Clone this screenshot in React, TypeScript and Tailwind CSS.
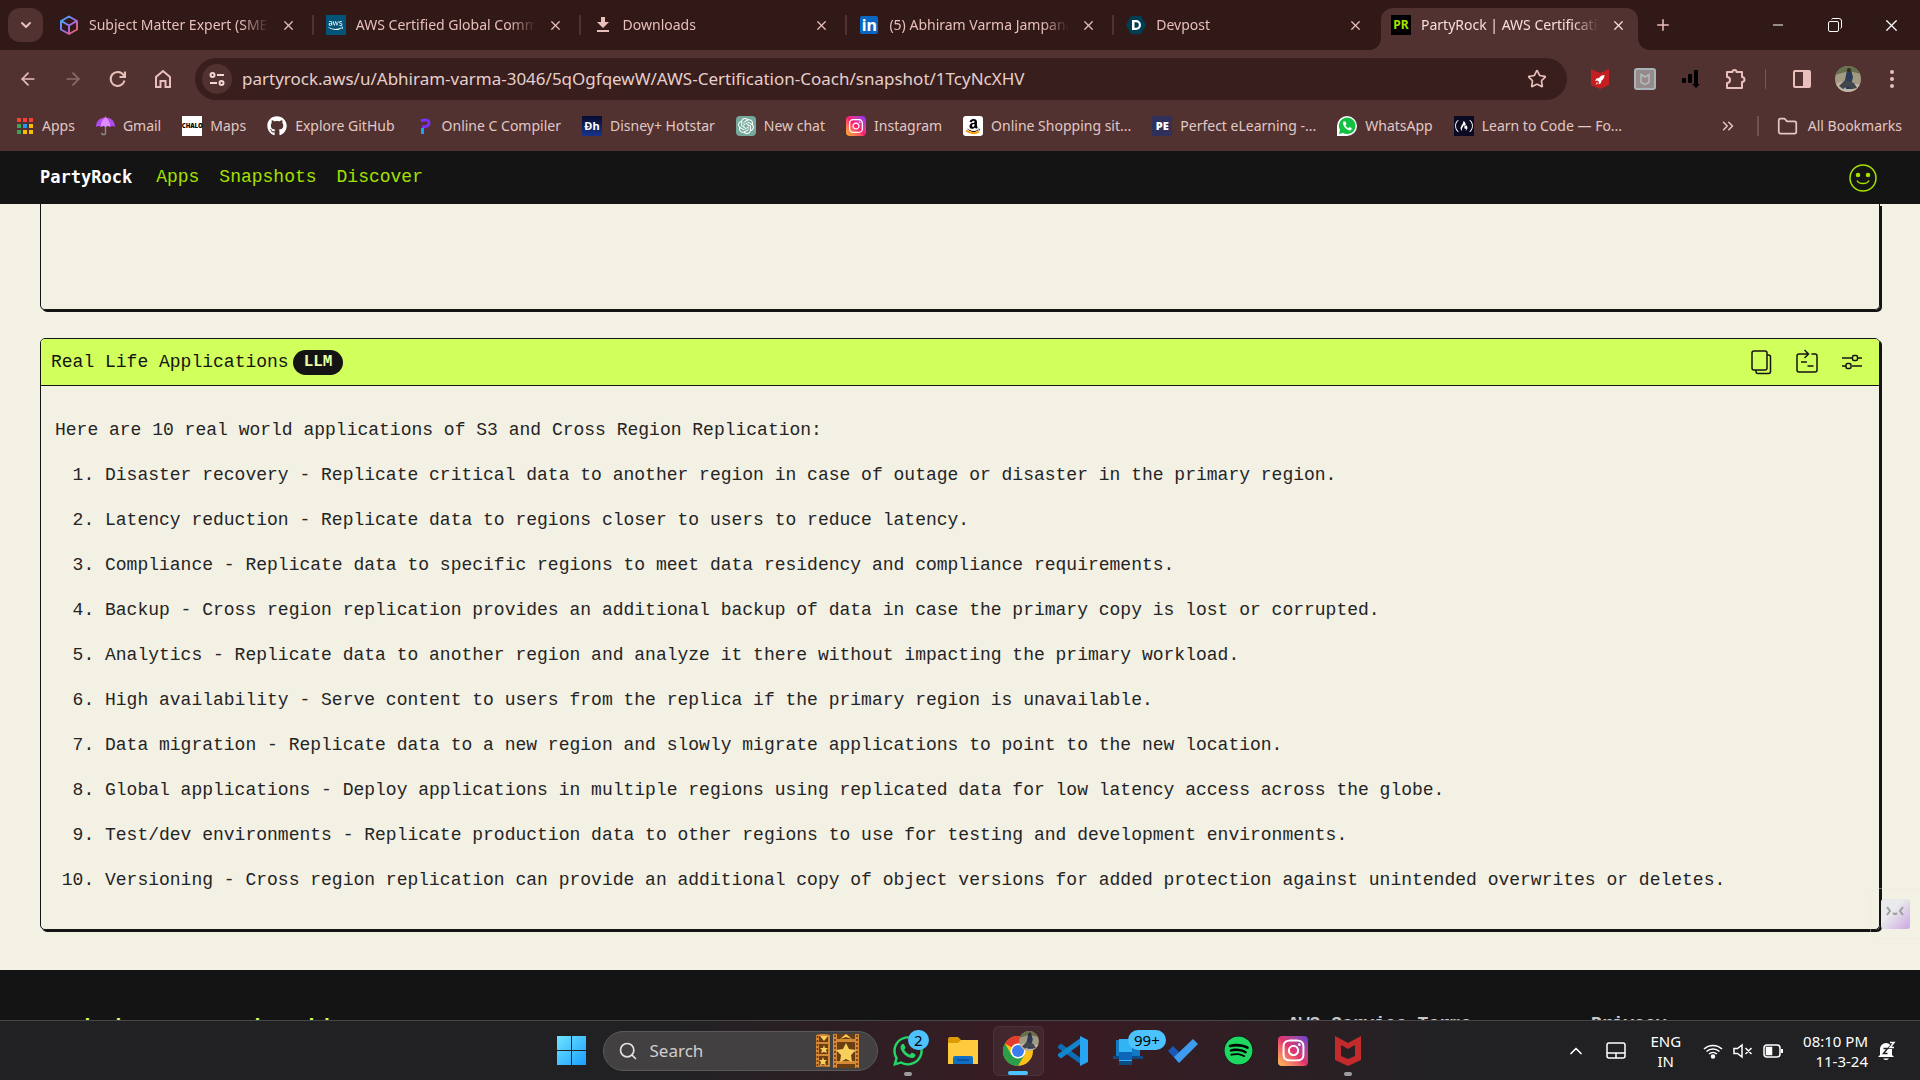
import React from 'react';
import { ArrowLeft, ArrowRight, ChevronDown, ChevronUp, ChevronsRight, Folder, Minus, Plus, Search, Star, X } from 'lucide-react';
import { FaAmazon, FaAws, FaFreeCodeCamp, FaGithub, FaInstagram, FaSpotify, FaWhatsapp } from 'react-icons/fa';
import { SiOpenai } from 'react-icons/si';

const tabs = [
  { title: 'Subject Matter Expert (SME) P', icon: <CubeIcon /> },
  { title: 'AWS Certified Global Commun', icon: <span className="flex size-5 items-center justify-center bg-[#015478] text-white"><FaAws size={15} /></span> },
  { title: 'Downloads', icon: <DownloadIcon /> },
  { title: '(5) Abhiram Varma Jampana |', icon: <span className="flex size-[18px] items-center justify-center rounded-xs bg-[#0a66c2] text-base leading-none font-bold text-white">in</span> },
  { title: 'Devpost', icon: <DevpostIcon /> },
];

const bookmarks = [
  { title: 'Apps', icon: <AppsGrid /> },
  { title: 'Gmail', icon: <UmbrellaIcon /> },
  { title: 'Maps', icon: <span className="flex size-5 items-center justify-center bg-white text-[6px] font-black text-black">CHALO</span> },
  { title: 'Explore GitHub', icon: <FaGithub size={20} color="#fff" /> },
  { title: 'Online C Compiler', icon: <ProgrammizIcon /> },
  { title: 'Disney+ Hotstar', icon: <span className="flex size-5 items-center justify-center bg-linear-to-b from-[#060b2e] to-[#17348c] text-[11px] font-bold text-white">Ðh</span> },
  { title: 'New chat', icon: <span className="flex size-5 items-center justify-center rounded-sm bg-[#74a99b] text-white"><SiOpenai size={16} /></span> },
  { title: 'Instagram', icon: <span className="flex size-5 items-center justify-center rounded-sm bg-linear-to-tr from-[#ffb300] via-[#ff0f6e] to-[#8a0bff] text-white"><FaInstagram size={16} /></span> },
  { title: 'Online Shopping sit...', icon: <AmazonIcon /> },
  { title: 'Perfect eLearning -...', icon: <span className="flex size-5 items-center justify-center bg-[#2f305c] text-[11px] font-black text-white">PE</span> },
  { title: 'WhatsApp', icon: <WhatsAppBubble /> },
  { title: 'Learn to Code — Fo...', icon: <span className="flex size-5 items-center justify-center bg-[#0a0a23] text-white"><FaFreeCodeCamp size={18} /></span> },
];

const applications = [
  'Disaster recovery - Replicate critical data to another region in case of outage or disaster in the primary region.',
  'Latency reduction - Replicate data to regions closer to users to reduce latency.',
  'Compliance - Replicate data to specific regions to meet data residency and compliance requirements.',
  'Backup - Cross region replication provides an additional backup of data in case the primary copy is lost or corrupted.',
  'Analytics - Replicate data to another region and analyze it there without impacting the primary workload.',
  'High availability - Serve content to users from the replica if the primary region is unavailable.',
  'Data migration - Replicate data to a new region and slowly migrate applications to point to the new location.',
  'Global applications - Deploy applications in multiple regions using replicated data for low latency access across the globe.',
  'Test/dev environments - Replicate production data to other regions to use for testing and development environments.',
  'Versioning - Cross region replication can provide an additional copy of object versions for added protection against unintended overwrites or deletes.',
];

function CubeIcon() {
  return (
    <svg width="20" height="20" viewBox="0 0 20 20" fill="none" strokeWidth="2" strokeLinejoin="round">
      <defs>
        <linearGradient id="cube" x1="0" y1="0" x2="1" y2="1">
          <stop offset="0" stopColor="#2fb4f5" />
          <stop offset=".5" stopColor="#9a6cf0" />
          <stop offset="1" stopColor="#ff5c3c" />
        </linearGradient>
      </defs>
      <path d="M10 1.500 18 6v8.500L10 19l-8-4.500V6zM2.500 6.200 10 10.500l7.500-4.300M10 10.500V18" stroke="url(#cube)" />
    </svg>
  );
}

function DownloadIcon() {
  return (
    <svg width="20" height="20" viewBox="0 0 20 20" fill="#e9bfbb">
      <path d="M8 2h4v5h4l-6 6-6-6h4zM4 15h12v2H4z" />
    </svg>
  );
}

function DevpostIcon() {
  return (
    <svg width="20" height="20" viewBox="0 0 20 20">
      <path d="M5 1h10l5 9-5 9H5l-5-9z" fill="#003e54" />
      <path d="M6 5h4a5 5 0 0 1 0 10H6zM8.500 7.200v5.600H10a2.800 2.800 0 0 0 0-5.600z" fill="#fff" fillRule="evenodd" />
    </svg>
  );
}

function AppsGrid() {
  const colors = ['#f44336', '#f44336', '#f44336', '#34a853', '#2196f3', '#fbbc04', '#34a853', '#fbbc04', '#fbbc04'];
  return (
    <svg width="18" height="18" viewBox="0 0 18 18">
      {colors.map((c, i) => (
        <rect key={i} x={(i % 3) * 6 + 1} y={Math.floor(i / 3) * 6 + 1} width="4" height="4" fill={c} />
      ))}
    </svg>
  );
}

function UmbrellaIcon() {
  return (
    <svg width="19" height="20" viewBox="0 0 20 20">
      <path d="M10 9v8q0 2-2 2t-2-2" fill="none" stroke="#8b8b8b" strokeWidth="1.500" />
      <path d="M10 0v2" stroke="#8b8b8b" strokeWidth="1.500" />
      <path d="M0 11C0 4 5 1 10 1s10 3 10 10q-3-2-5 0-2.500-2-5 0-2.500-2-5 0-2-2-5 0z" fill="#b14cf0" />
      <path d="M5 11C5 5 8 2 10 1c2 1 5 4 5 10q-2.500-2-5 0-2.500-2-5 0z" fill="#e08cff" />
    </svg>
  );
}

function ProgrammizIcon() {
  return (
    <svg width="18" height="18" viewBox="0 0 18 18" fill="none" strokeWidth="3">
      <path d="M5 4c4-2 8-1 8 2s-4 4-7 4" stroke="#7b2ff7" />
      <path d="M6.500 11v6" stroke="#14a5f5" />
    </svg>
  );
}

function AmazonIcon() {
  return (
    <svg width="20" height="20" viewBox="0 0 20 20">
      <rect width="20" height="20" rx="3" fill="#fff" />
      <FaAmazon x="3" y="2" size={15} color="#000" />
      <path d="M3 14.500q7 5 13 1" fill="none" stroke="#ff9900" strokeWidth="2" />
    </svg>
  );
}

function WhatsAppBubble() {
  return (
    <svg width="20" height="20" viewBox="0 0 20 20">
      <path d="M0 20V10A10 10 0 1 1 10 20z" fill="#fff" />
      <path d="m2 18 1-4a8.300 8.300 0 1 1 3 3z" fill="#12c143" />
      <path d="M6.500 5.500c-2 3 3 9 6.500 9 1.500-.5 2-1.500 1.500-2.500l-2-1-1.200 1.200q-2-1-3-3L9.500 8l-1-2.500z" fill="#fff" />
    </svg>
  );
}

function WindowTabs() {
  return (
    <div className="flex h-[50px] items-stretch bg-[#301917] text-sm text-[#e9bfbb]">
      <button aria-label="Search tabs" className="mt-2 ml-2 flex h-[34px] w-[35px] shrink-0 items-center justify-center rounded-xl bg-[#523230]">
        <ChevronDown size={16} strokeWidth={3} />
      </button>
      <div className="ml-1 flex w-[1334px] min-w-0 shrink">
        {tabs.map((tab, i) => (
          <div key={tab.title} className="flex min-w-0 flex-1 items-center pl-3">
            <span className="flex w-5 shrink-0 justify-center">{tab.icon}</span>
            <button className="ml-2.5 min-w-0 flex-1 overflow-hidden text-left whitespace-nowrap [mask-image:linear-gradient(to_right,black_85%,transparent)]">{tab.title}</button>
            <button aria-label={'Close ' + tab.title} className="mr-4 ml-3 shrink-0"><X size={15} strokeWidth={2} /></button>
            <span className={i < 4 ? 'h-5 w-0.5 bg-[#523230]' : 'w-0.5'} />
          </div>
        ))}
      </div>
      <div className="relative mt-2 flex w-[257px] shrink-0 items-center rounded-t-xl bg-[#523230] pb-2 pl-2.5 text-[#f6dedb]">
        <svg className="absolute bottom-0 -left-3" width="12" height="12"><path d="M12 0v12H0A12 12 0 0 0 12 0" fill="#523230" /></svg>
        <svg className="absolute -right-3 bottom-0" width="12" height="12"><path d="M0 0v12h12A12 12 0 0 1 0 0" fill="#523230" /></svg>
        <span className="flex size-5 shrink-0 items-center justify-center bg-black text-xs font-bold text-[#a5e100]">PR</span>
        <button className="ml-2.5 min-w-0 flex-1 overflow-hidden text-left whitespace-nowrap [mask-image:linear-gradient(to_right,black_85%,transparent)]">PartyRock | AWS Certification</button>
        <button aria-label="Close tab" className="mx-3 shrink-0"><X size={15} strokeWidth={2} /></button>
      </div>
      <button aria-label="New tab" className="ml-4 w-5"><Plus size={18} /></button>
      <div className="ml-auto flex text-white">
        <button aria-label="Minimize" className="flex w-[57px] items-center justify-center"><Minus size={16} strokeWidth={1.500} /></button>
        <button aria-label="Restore" className="flex w-[57px] items-center justify-center">
          <svg width="14" height="14" viewBox="0 0 14 14" fill="none" stroke="currentColor"><rect x=".5" y="3.500" width="10" height="10" rx="1.500" /><path d="M3.500 1.500q.5-1 1.500-1h6q2.500 0 2.500 2.500v6q0 1-1 1.500" /></svg>
        </button>
        <button aria-label="Close window" className="flex w-[57px] items-center justify-center"><X size={19} strokeWidth={1.500} /></button>
      </div>
    </div>
  );
}

function Toolbar() {
  return (
    <div className="flex h-[58px] items-center text-[#e9bfbb]">
      <div className="flex w-[195px] shrink-0 items-center gap-[25px] pl-[18px]">
        <button aria-label="Back"><ArrowLeft size={20} /></button>
        <button aria-label="Forward" className="text-[#8f6c69]"><ArrowRight size={20} /></button>
        <button aria-label="Reload">
          <svg width="20" height="20" viewBox="0 0 20 20" fill="none" stroke="currentColor" strokeWidth="2"><path d="M16.500 11.500A7 7 0 1 1 15.500 6l1.500 2M17 2.500V8h-5.500" /></svg>
        </button>
        <button aria-label="Home">
          <svg width="20" height="20" viewBox="0 0 20 20" fill="none" stroke="currentColor" strokeWidth="2"><path d="M3 18V8l7-6 7 6v10h-4.500v-6h-5v6z" /></svg>
        </button>
      </div>
      <div className="flex h-[42px] min-w-0 flex-1 items-center rounded-full bg-[#381e1c] pr-5 pl-[7px]">
        <button aria-label="Site information" className="flex size-[30px] shrink-0 items-center justify-center rounded-full bg-[#523230]">
          <svg width="18" height="18" viewBox="0 0 18 18" fill="none" stroke="#f0d8d5" strokeWidth="2"><circle cx="4.500" cy="5" r="2" /><path d="M9 5h7M2 13h7" /><circle cx="13.500" cy="13" r="2" /></svg>
        </button>
        <input aria-label="Address" className="ml-2.5 min-w-0 flex-1 bg-transparent text-[17px] text-[#e6cfcc] outline-none" defaultValue="partyrock.aws/u/Abhiram-varma-3046/5qOgfqewW/AWS-Certification-Coach/snapshot/1TcyNcXHV" />
        <button aria-label="Bookmark this tab"><Star size={20} /></button>
      </div>
      <div className="flex w-[353px] shrink-0 items-center pl-[22px]">
        <button aria-label="McAfee" className="flex w-[45px] pl-0.5">
          <svg width="18" height="20" viewBox="0 0 18 20">
            <path d="M0 0 9 4l9-4v16l-9 4-9-4z" fill="#c41e20" />
            <path d="M13.500 6c-3 0-4.500 1.500-5.500 3l-2.500.5L4 12l2.500-.5L8 13l-.5 2.500 2.500-1.500.5-2.500c1.500-1 3-2.500 3-5.500M6 13l-1.500 3L7 14z" fill="#fff" />
          </svg>
        </button>
        <button aria-label="Web protection" className="flex w-[46px]">
          <svg width="22" height="22" viewBox="0 0 22 22" fill="none"><rect x="1" y="1" width="20" height="20" rx="2" fill="#968a8a" stroke="#a9b4b8" strokeWidth="2" /><path d="M7 6.500 11 9l4-2.500v8L11 16.500l-4-2z" stroke="#b3babd" strokeWidth="1.500" /></svg>
        </button>
        <button aria-label="Downloader" className="flex w-[45px] pl-0.5">
          <svg width="18" height="20" viewBox="0 0 18 20" fill="#000"><rect y="9" width="4" height="5" rx="1" /><rect x="6" y="5" width="4" height="9" rx="1" /><path d="M12 1h4v14h2l-4 4-4-4h2z" /></svg>
        </button>
        <button aria-label="Extensions" className="flex w-[40px]">
          <svg width="22" height="22" viewBox="0 0 22 22" fill="none" stroke="currentColor" strokeWidth="2" strokeLinejoin="round"><path d="M2 4h5.500a2 2 0 0 1 4 0H17v5a2.500 2.500 0 0 1 0 5v6H2v-5a3 3 0 0 0 0-6z" /></svg>
        </button>
        <span className="h-5 w-px bg-[#7a5552]" />
        <button aria-label="Side panel" className="ml-[26px]">
          <svg width="20" height="20" viewBox="0 0 20 20"><rect x="2" y="2" width="16" height="16" rx="1" fill="none" stroke="currentColor" strokeWidth="2" /><path d="M11 2h7v16h-7z" fill="currentColor" /></svg>
        </button>
        <button aria-label="Profile" className="ml-[23px]"><Avatar size={26} /></button>
        <button aria-label="Menu" className="ml-[27px]">
          <svg width="8" height="20" viewBox="0 0 8 20" fill="currentColor"><circle cx="4" cy="3" r="2" /><circle cx="4" cy="10" r="2" /><circle cx="4" cy="17" r="2" /></svg>
        </button>
      </div>
    </div>
  );
}

function Avatar({ size }: { size: number }) {
  return (
    <svg width={size} height={size} viewBox="0 0 26 26">
      <clipPath id={'avatar' + size}><circle cx="13" cy="13" r="13" /></clipPath>
      <g clipPath={`url(#avatar${size})`}>
        <path d="M0 0h26v26H0z" fill="#a39a82" />
        <path d="M0 0h26v8L14 5 0 9z" fill="#66704d" />
        <path d="M0 18l9-3 17 4v7H0z" fill="#c0b6a5" />
        <path d="M12 4h4l2 7-2 8 2 4h-7l-1-9z" fill="#2b3b5a" />
        <path d="M4 20l6-6 9 3 3 5-5 1-4-3-5 3z" fill="#41474b" />
        <circle cx="14" cy="4" r="2" fill="#3b2a23" />
      </g>
    </svg>
  );
}

function BookmarksBar() {
  return (
    <nav aria-label="Bookmarks" className="flex h-9 items-center pr-[18px] pl-4 text-sm whitespace-nowrap text-[#e0c8c5]">
      <div className="flex min-w-0 flex-1 gap-[21px] overflow-hidden">
        {bookmarks.map((b) => (
          <a key={b.title} href="#" className="flex items-center gap-2">{b.icon}{b.title}</a>
        ))}
      </div>
      <button aria-label="More bookmarks" className="mr-5"><ChevronsRight size={18} /></button>
      <span className="h-5 w-0.5 bg-[#75504d]" />
      <button className="ml-[18px] flex items-center gap-2.5"><Folder size={21} />All Bookmarks</button>
    </nav>
  );
}

function SiteHeader() {
  return (
    <header className="flex h-[53px] shrink-0 items-center bg-[#141414] px-10 font-['Liberation_Mono',monospace] text-[18px] text-[#a5e100]">
      <a href="#" className="font-['DejaVu_Sans_Mono',monospace] text-[17px] font-bold text-white">PartyRock</a>
      <nav className="ml-6 flex gap-5">
        <a href="#">Apps</a>
        <a href="#">Snapshots</a>
        <a href="#">Discover</a>
      </nav>
      <button aria-label="Account" className="ml-auto mr-[3px]">
        <svg width="28" height="28" viewBox="0 0 28 28" fill="none" stroke="currentColor" strokeWidth="1.500"><circle cx="14" cy="14" r="13" /><circle cx="9" cy="11" r="1.500" fill="currentColor" /><circle cx="19" cy="11" r="1.500" fill="currentColor" /><path d="M8 16.500c2 4 10 4 12 0" /></svg>
      </button>
    </header>
  );
}

function ResultCard() {
  return (
    <section className="mt-7 rounded-[5px] border border-[#141414] shadow-[2px_2px_0_#141414]">
      <div className="flex h-[47px] items-center rounded-t-[4px] border-b border-[#141414] bg-[#d1ff5c] pr-4 pl-2.5">
        <h2 className="text-[18px]">Real Life Applications</h2>
        <span className="ml-1 rounded-full bg-[#141414] px-[11px] text-base leading-[25px] font-bold text-[#e6ffa8]">LLM</span>
        <div className="ml-auto flex items-center gap-[22px]">
          <button aria-label="Copy">
            <svg width="24" height="26" viewBox="0 0 24 26" fill="none" stroke="currentColor" strokeWidth="1.500"><rect x="3" y="2" width="15" height="19" rx="2" /><path d="M18 6h1.500a2 2 0 0 1 2 2v14.500a2 2 0 0 1-2 2H9a2 2 0 0 1-2-2V21" /></svg>
          </button>
          <button aria-label="Retry">
            <svg width="24" height="26" viewBox="0 0 24 26" fill="none" stroke="currentColor" strokeWidth="1.500"><path d="M16.500 5H20a2 2 0 0 1 2 2v14a2 2 0 0 1-2 2H4a2 2 0 0 1-2-2V7a2 2 0 0 1 2-2h9M9.500 1l4 4-4 4M6 13h6M12.500 17h6" /></svg>
          </button>
          <button aria-label="Settings">
            <svg width="22" height="22" viewBox="0 0 22 22" fill="none" stroke="currentColor" strokeWidth="1.500"><path d="M1 7h10M17 7h4M1 15h4M11 15h10" /><rect x="11.500" y="4.500" width="5" height="5" rx="1.500" /><rect x="5" y="12.500" width="5" height="5" rx="1.500" /></svg>
          </button>
        </div>
      </div>
      <div className="px-3.5 pt-[31px] pb-[35px] text-[18px] leading-[27px] text-[#242424]">
        <p>Here are 10 real world applications of S3 and Cross Region Replication:</p>
        <ol className="mt-[18px] flex list-decimal flex-col gap-[18px] pl-[50px]">
          {applications.map((text) => (
            <li key={text}>{text}</li>
          ))}
        </ol>
      </div>
    </section>
  );
}

function Page() {
  return (
    <div className="relative flex min-h-0 flex-1 flex-col overflow-hidden bg-[#f3f0e4] font-['Liberation_Mono',monospace] text-[#141414]">
      <SiteHeader />
      <main className="shrink-0 px-10 pb-10">
        <section className="h-[106px] rounded-b-[5px] border border-t-0 border-[#141414] shadow-[2px_2px_0_#141414]" />
        <ResultCard />
      </main>
      <footer className="flex shrink-0 items-start bg-[#141414] px-10 pt-[42px] pb-10 leading-6 font-bold text-[#c8c8c8]">
        <a href="#" className="flex-1 pt-1 text-[21px] text-[#d1ff5c]">Read the PartyRock Guide</a>
        <a href="#" className="w-[303px] text-[18px]">AWS Service Terms</a>
        <a href="#" className="w-[289px] text-[18px]">Privacy</a>
      </footer>
      <button aria-label="Assistant" className="absolute right-0 bottom-[81px] flex h-[51px] w-[50px] items-center rounded-l-lg border border-r-0 border-[#ece9dd]/40 pl-2.5">
        <svg width="29" height="30" viewBox="0 0 29 30" fill="none">
          <defs><linearGradient id="mascot" x1="0" y1="0" x2="1" y2="1"><stop offset=".4" stopColor="#e8eaeb" /><stop offset="1" stopColor="#cda5e4" /></linearGradient></defs>
          <rect width="29" height="30" rx="3" fill="url(#mascot)" />
          <path d="m6 8 3 4-3 4M22 8l-3 4 3 4M12 14q2 2 4 0" stroke="#9b9ea0" strokeWidth="2" />
        </svg>
      </button>
    </div>
  );
}

function TaskButton({ label, running, badge, children }: { label: string; running?: boolean; badge?: string; children: React.ReactNode }) {
  return (
    <button aria-label={label} className="relative flex h-[50px] w-[55px] shrink-0 items-center justify-center">
      {children}
      {badge && <span className="absolute top-1 left-1/2 min-w-5 rounded-full bg-[#4cc2ff] px-1.5 text-[15px] leading-5 text-black">{badge}</span>}
      {running && <span className="absolute bottom-0 h-1 w-2 rounded-full bg-[#9d9da0]" />}
    </button>
  );
}

function Taskbar() {
  return (
    <div className="grid h-[60px] shrink-0 grid-cols-[1fr_auto_1fr] items-center border-t border-[#474749] bg-linear-to-r from-[#212124] from-35% via-[#3a1b23] via-55% to-[#212124] to-75% text-white">
      <div />
      <div className="flex items-center">
        <TaskButton label="Start">
          <svg width="30" height="30" viewBox="0 0 30 30">
            <defs><linearGradient id="win" x1="0" y1="0" x2="1" y2="1"><stop stopColor="#6fe4ff" /><stop offset="1" stopColor="#1a9fff" /></linearGradient></defs>
            <path d="M0 0h14v14H0zM15 0h14v14H15zM0 15h14v14H0zM15 15h14v14H15z" fill="url(#win)" />
          </svg>
        </TaskButton>
        <div className="mx-[3px] flex h-10 w-[275px] items-center rounded-full border border-[#5a5859] bg-[#434041] pr-[18px] pl-3.5">
          <Search size={20} color="#e2e2e2" />
          <input aria-label="Search" placeholder="Search" className="ml-3 min-w-0 flex-1 bg-transparent text-[17px] outline-none placeholder:text-[#cfcfcf]" />
          <svg width="43" height="34" viewBox="0 0 43 34">
            <path d="M0 1q7-2 14 0v32q-7-1-14 0z" fill="#d58a35" />
            <path d="M17 0h26v34H17z" fill="#d58a35" />
            <path d="M3 2h9v6H3zM3 10h9v10H3zM3 22h9v9H3zM21 0h18v5H21zM21 8h18v19H21zM21 30h18v4H21z" fill="#6b3d12" />
            <path d="m30 9 3 6 7 1-5 5 1 7-6-3-6 3 1-7-5-5 7-1zM8 11l1 3h3l-2 2 1 3-3-1-3 1 1-3-2-2h3zM7 23l1 3h3l-2 2 1 3-3-1-3 1 1-3-2-2h3zM24 5l6-5 6 5-6-2zM4 2h8l-4 5z" fill="#f7cf5c" />
            <path d="M19 1v33M41 1v33M1.500 2v30" stroke="#6b3520" strokeWidth="1.500" strokeDasharray="2 2" />
          </svg>
        </div>
        <TaskButton label="WhatsApp" running badge="2"><FaWhatsapp size={34} color="#25d366" /></TaskButton>
        <TaskButton label="File Explorer">
          <svg width="30" height="28" viewBox="0 0 30 28"><path d="M0 2q0-2 2-2h8l3 3h15v8H0z" fill="#dc9b04" /><path d="M0 6h10l3-3h17v24H0z" fill="#fdcb3d" /><path d="M5 26v-5q0-2 2-2h16q2 0 2 2v6H5z" fill="#0f6fc5" /><path d="M9 23h12" stroke="#0a4a92" strokeWidth="1.500" /></svg>
        </TaskButton>
        <button aria-label="Chrome" className="relative mx-0.5 flex h-[50px] w-[51px] items-center justify-center rounded-md border border-white/5 bg-white/5">
          <svg width="30" height="30" viewBox="0 0 30 30">
            <circle cx="15" cy="15" r="15" fill="#fbc116" />
            <path d="M15 15 2 7.500A15 15 0 0 1 28 7.500H15z" fill="#e33b2e" />
            <path d="M2 7.500A15 15 0 0 0 15 30l6.500-11.200L8.500 19z" fill="#2a9e49" />
            <circle cx="15" cy="15" r="7.500" fill="#fff" /><circle cx="15" cy="15" r="6" fill="#3b7ded" />
          </svg>
          <span className="absolute top-1 right-1"><Avatar size={20} /></span>
          <span className="absolute bottom-0 h-1 w-5 rounded-full bg-[#4cc2ff]" />
        </button>
        <TaskButton label="Visual Studio Code">
          <svg width="30" height="30" viewBox="0 0 30 30"><path d="M0 10l3-2.500L24 23v6L0 12z" fill="#0d6db4" /><path d="M0 20l3 2.500L24 7V1L0 18z" fill="#1285cf" /><path d="m22 0 8 4v22l-8 4z" fill="#27a4f2" /></svg>
        </TaskButton>
        <TaskButton label="Phone Link" badge="99+">
          <svg width="30" height="28" viewBox="0 0 30 28"><path d="M3 3h24v16H3z" fill="#1479c5" /><path d="M0 19h30v3H0z" fill="#0b4b86" /><path d="M6 2h13v26H6z" fill="#33b3f1" /><path d="M6 15h13v8H6z" fill="#0d66b8" /><path d="M6 24h13v4H6z" fill="#0b4b86" /></svg>
        </TaskButton>
        <TaskButton label="To Do">
          <svg width="30" height="26" viewBox="0 0 30 26"><path d="m0 13 5-5 11 11-5 6z" fill="#1b59b8" /><path d="M11 25 6 19 25 1l5 5z" fill="#3f9bee" /></svg>
        </TaskButton>
        <TaskButton label="Spotify"><span className="rounded-full bg-black"><FaSpotify size={29} color="#1ed760" /></span></TaskButton>
        <TaskButton label="Instagram">
          <span className="flex size-[30px] items-center justify-center rounded-sm bg-linear-to-tr from-[#fdc04f] via-[#e2306c] to-[#6a3cd0]"><FaInstagram size={25} color="#fff" /></span>
        </TaskButton>
        <TaskButton label="McAfee" running>
          <svg width="26" height="30" viewBox="0 0 26 30"><path d="m0 0 13 7 13-7v24l-13 6-13-6zM6 9v11l7 3 7-3V9l-7 4z" fill="#c32a2b" fillRule="evenodd" /></svg>
        </TaskButton>
      </div>
      <div className="flex items-center justify-end pr-6 text-[15px] leading-5">
        <button aria-label="Show hidden icons"><ChevronUp size={20} /></button>
        <button aria-label="Touchpad" className="ml-5">
          <svg width="20" height="18" viewBox="0 0 20 18" fill="none" stroke="currentColor" strokeWidth="1.500"><rect x="1" y="1" width="18" height="15" rx="2" /><path d="M1 11h18M10 11v5" /></svg>
        </button>
        <button className="ml-6 text-center">ENG<br />IN</button>
        <button aria-label="Network, sound and battery" className="ml-[22px] flex items-center gap-2.5">
          <svg width="20" height="16" viewBox="0 0 20 16" fill="none" stroke="currentColor" strokeWidth="1.500"><path d="M1 6a13 13 0 0 1 18 0M3.500 8.500a9.500 9.500 0 0 1 13 0M6 11a6 6 0 0 1 8 0" /><circle cx="10" cy="13.500" r="1.500" fill="currentColor" /></svg>
          <svg width="20" height="16" viewBox="0 0 20 16" fill="none" stroke="currentColor" strokeWidth="1.500"><path d="M1 5.500h3.500L9 2v12l-4.500-3.500H1zM12.500 5l6 6M18.500 5l-6 6" /></svg>
          <svg width="21" height="14" viewBox="0 0 21 14" fill="none" stroke="currentColor" strokeWidth="1.500"><rect x="1" y="1" width="16" height="12" rx="3" /><path d="M3.500 3.500h5v7h-5z" fill="currentColor" /><path d="M19 5v4" strokeWidth="2" /></svg>
        </button>
        <button className="ml-[19px] text-right">08:10 PM<br />11-3-24</button>
        <button aria-label="Notifications" className="ml-2.5">
          <svg width="18" height="20" viewBox="0 0 18 20" fill="currentColor"><path d="M2 14V8a6 6 0 0 1 12 0v6l2 2H0zM5 17.500h6q-3 3-6 0" /><path d="M12 1.500h4l-4 5h4" fill="none" stroke="#212124" strokeWidth="3" /><path d="M12 1.500h4l-4 5h4" fill="none" stroke="currentColor" strokeWidth="1.500" /><path d="M5.500 7.500h4l-4 5h4" fill="none" stroke="#212124" strokeWidth="1.500" /></svg>
        </button>
      </div>
    </div>
  );
}

export default function App() {
  return (
    <div className="flex h-screen flex-col overflow-hidden font-['Noto_Sans',sans-serif]">
      <WindowTabs />
      <div className="h-[101px] shrink-0 bg-[#523230]">
        <Toolbar />
        <BookmarksBar />
      </div>
      <Page />
      <Taskbar />
    </div>
  );
}
